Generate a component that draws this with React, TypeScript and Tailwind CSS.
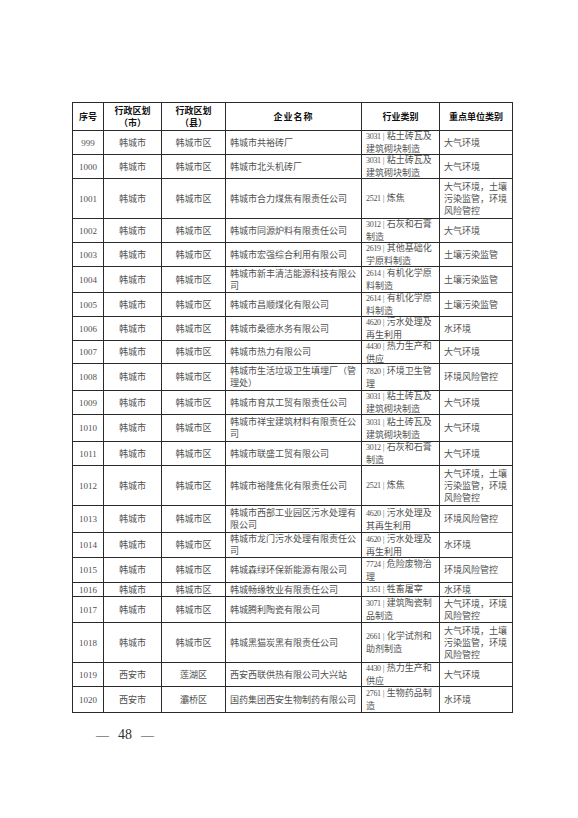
type Row = {
  no: string;
  city: string;
  county: string;
  name: string[];
  industry: string[];
  unit: string[];
  h: string;
};

const HC = "韩城市";
const HQ = "韩城市区";

const rows: Row[] = [
  { no: "999", city: HC, county: HQ, name: ["韩城市共裕砖厂"], industry: ["3031|粘土砖瓦及", "建筑砌块制造"], unit: ["大气环境"], h: "h-[24px]" },
  { no: "1000", city: HC, county: HQ, name: ["韩城市北头机砖厂"], industry: ["3031|粘土砖瓦及", "建筑砌块制造"], unit: ["大气环境"], h: "h-[24px]" },
  { no: "1001", city: HC, county: HQ, name: ["韩城市合力煤焦有限责任公司"], industry: ["2521|炼焦"], unit: ["大气环境，土壤", "污染监管，环境", "风险管控"], h: "h-[40px]" },
  { no: "1002", city: HC, county: HQ, name: ["韩城市同源炉料有限责任公司"], industry: ["3012|石灰和石膏", "制造"], unit: ["大气环境"], h: "h-[24px]" },
  { no: "1003", city: HC, county: HQ, name: ["韩城市宏强综合利用有限公司"], industry: ["2619|其他基础化", "学原料制造"], unit: ["土壤污染监管"], h: "h-[24px]" },
  { no: "1004", city: HC, county: HQ, name: ["韩城市新丰清洁能源科技有限公", "司"], industry: ["2614|有机化学原", "料制造"], unit: ["土壤污染监管"], h: "h-[26px]" },
  { no: "1005", city: HC, county: HQ, name: ["韩城市昌顺煤化有限公司"], industry: ["2614|有机化学原", "料制造"], unit: ["土壤污染监管"], h: "h-[24px]" },
  { no: "1006", city: HC, county: HQ, name: ["韩城市桑德水务有限公司"], industry: ["4620|污水处理及", "再生利用"], unit: ["水环境"], h: "h-[24px]" },
  { no: "1007", city: HC, county: HQ, name: ["韩城市热力有限公司"], industry: ["4430|热力生产和", "供应"], unit: ["大气环境"], h: "h-[23px]" },
  { no: "1008", city: HC, county: HQ, name: ["韩城市生活垃圾卫生填埋厂（管", "理处）"], industry: ["7820|环境卫生管", "理"], unit: ["环境风险管控"], h: "h-[27px]" },
  { no: "1009", city: HC, county: HQ, name: ["韩城市育苁工贸有限责任公司"], industry: ["3031|粘土砖瓦及", "建筑砌块制造"], unit: ["大气环境"], h: "h-[24px]" },
  { no: "1010", city: HC, county: HQ, name: ["韩城市祥宝建筑材料有限责任公", "司"], industry: ["3031|粘土砖瓦及", "建筑砌块制造"], unit: ["大气环境"], h: "h-[27px]" },
  { no: "1011", city: HC, county: HQ, name: ["韩城市联盛工贸有限公司"], industry: ["3012|石灰和石膏", "制造"], unit: ["大气环境"], h: "h-[24px]" },
  { no: "1012", city: HC, county: HQ, name: ["韩城市裕隆焦化有限责任公司"], industry: ["2521|炼焦"], unit: ["大气环境，土壤", "污染监管，环境", "风险管控"], h: "h-[40px]" },
  { no: "1013", city: HC, county: HQ, name: ["韩城市西部工业园区污水处理有", "限公司"], industry: ["4620|污水处理及", "其再生利用"], unit: ["环境风险管控"], h: "h-[27px]" },
  { no: "1014", city: HC, county: HQ, name: ["韩城市龙门污水处理有限责任公", "司"], industry: ["4620|污水处理及", "再生利用"], unit: ["水环境"], h: "h-[25px]" },
  { no: "1015", city: HC, county: HQ, name: ["韩城森绿环保新能源有限公司"], industry: ["7724|危险废物治", "理"], unit: ["环境风险管控"], h: "h-[25px]" },
  { no: "1016", city: HC, county: HQ, name: ["韩城畅缘牧业有限责任公司"], industry: ["1351|牲畜屠宰"], unit: ["水环境"], h: "h-[14px]" },
  { no: "1017", city: HC, county: HQ, name: ["韩城腾利陶瓷有限公司"], industry: ["3071|建筑陶瓷制", "品制造"], unit: ["大气环境，环境", "风险管控"], h: "h-[26px]" },
  { no: "1018", city: HC, county: HQ, name: ["韩城黑猫炭黑有限责任公司"], industry: ["2661|化学试剂和", "助剂制造"], unit: ["大气环境，土壤", "污染监管，环境", "风险管控"], h: "h-[40px]" },
  { no: "1019", city: "西安市", county: "莲湖区", name: ["西安西联供热有限公司大兴站"], industry: ["4430|热力生产和", "供应"], unit: ["大气环境"], h: "h-[24px]" },
  { no: "1020", city: "西安市", county: "灞桥区", name: ["国药集团西安生物制药有限公司"], industry: ["2761|生物药品制", "造"], unit: ["水环境"], h: "h-[26px]" },
];

// industry lines look like "3031 | 粘土砖瓦及": small code, thin bar, then text
function IndustryLine({ text }: { text: string }) {
  const bar = text.indexOf("|");
  if (bar < 0) return <div className="whitespace-nowrap">{text}</div>;
  return (
    <div className="whitespace-nowrap">
      <span className="text-[8px] tracking-[-0.3px]">{text.slice(0, bar)}</span>
      <span className="mx-[2px] text-[#777]">|</span>
      {text.slice(bar + 1)}
    </div>
  );
}

function Lines({ lines }: { lines: string[] }) {
  return (
    <div>
      {lines.map((l, i) => (
        <div key={i} className="whitespace-nowrap">
          {l}
        </div>
      ))}
    </div>
  );
}

const cols = ["w-[31px]", "w-[58px]", "w-[64px]", "w-[136px]", "w-[78px]", "w-[73px]"];
const cellBase = "flex items-center h-full border-r border-[#2a2a2a] shrink-0";

export default function App() {
  return (
    <div className="w-[578px] h-[818px] bg-white pt-[102px] pl-[72px] font-['Liberation_Serif','Noto_Sans_CJK_SC',serif] text-[#505050] text-[9px] leading-[12px]">
      <div className="w-[441px] border-l border-t border-[#2a2a2a]">
        <div className="flex h-[28px] border-b border-[#2a2a2a] font-['Noto_Sans_CJK_SC',sans-serif] font-bold text-[#111] text-[9px] leading-[12px]">
          <div className={`${cellBase} ${cols[0]} justify-center`}>序号</div>
          <div className={`${cellBase} ${cols[1]} justify-center text-center`}>
            <div>
              <div>行政区划</div>
              <div>（市）</div>
            </div>
          </div>
          <div className={`${cellBase} ${cols[2]} justify-center text-center`}>
            <div>
              <div>行政区划</div>
              <div>（县）</div>
            </div>
          </div>
          <div className={`${cellBase} ${cols[3]} justify-center tracking-[1px]`}>企业名称</div>
          <div className={`${cellBase} ${cols[4]} justify-center`}>行业类别</div>
          <div className={`${cellBase} ${cols[5]} justify-center`}>重点单位类别</div>
        </div>
        {rows.map((r) => (
          <div key={r.no} className={`flex border-b border-[#2a2a2a] ${r.h}`}>
            <div className={`${cellBase} ${cols[0]} justify-center`}>{r.no}</div>
            <div className={`${cellBase} ${cols[1]} justify-center`}>{r.city}</div>
            <div className={`${cellBase} ${cols[2]} justify-center`}>{r.county}</div>
            <div className={`${cellBase} ${cols[3]} pl-[4px]`}>
              <Lines lines={r.name} />
            </div>
            <div className={`${cellBase} ${cols[4]} pl-[4px]`}>
              <div>
                {r.industry.map((l, i) => (
                  <IndustryLine key={i} text={l} />
                ))}
              </div>
            </div>
            <div className={`${cellBase} ${cols[5]} pl-[4px]`}>
              <Lines lines={r.unit} />
            </div>
          </div>
        ))}
      </div>
      <div className="mt-[14px] pl-[24px] flex items-center text-[13px] leading-[16px] text-[#333] font-['Liberation_Serif',serif]">
        <span>—</span>
        <span className="mx-[9px] text-[14px]">48</span>
        <span>—</span>
      </div>
    </div>
  );
}
